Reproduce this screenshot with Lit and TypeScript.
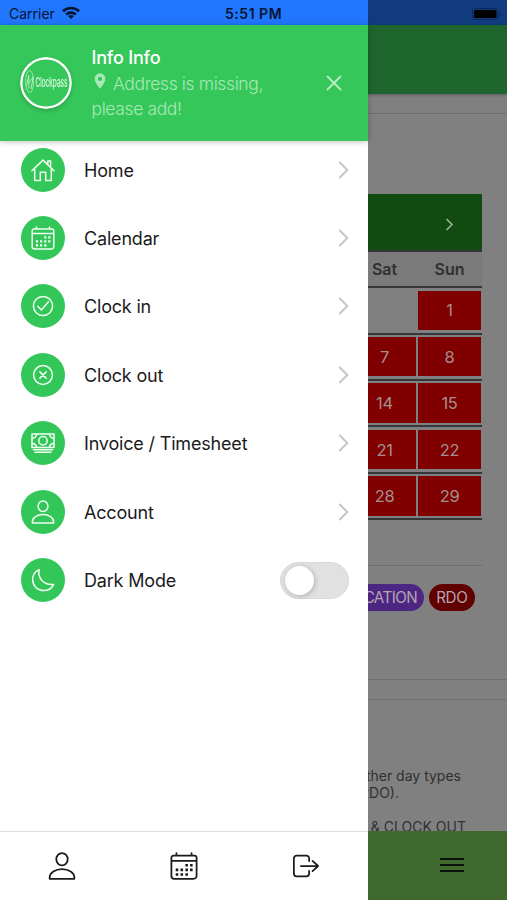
import { LitElement, html, svg, css } from "lit";
import { customElement, property } from "lit/decorators.js";

const calendarShape = svg`
  <path d="M3.2 3h17.6a2 2 0 0 1 2 2v15.5a2.5 2.5 0 0 1-2.5 2.5H3.7a2.5 2.5 0 0 1-2.5-2.5V5a2 2 0 0 1 2-2zM1.2 7.6h21.6M5.5 .9v2.1M18.5 .9v2.1"/>
  <path class="dots" d="M13.2 10.2h2.2v2.2h-2.2zM17.2 10.2h2.2v2.2h-2.2zM4.9 14.2h2.2v2.2h-2.2zM9 14.2h2.2v2.2H9zM13.2 14.2h2.2v2.2h-2.2zM17.2 14.2h2.2v2.2h-2.2zM4.9 18.2h2.2v2.2h-2.2zM9 18.2h2.2v2.2H9zM13.2 18.2h2.2v2.2h-2.2z"/>`;

const personShape = svg`
  <ellipse cx="12" cy="6.2" rx="4.9" ry="5.3"/>
  <path d="M1.4 23v-1.2c0-4 4.8-7.2 10.6-7.2s10.6 3.2 10.6 7.2V23z"/>`;

const shapes: Record<string, unknown> = {
  home: svg`<path d="M.9 12.8 12 2.1l11.1 10.7M3.7 10.6V22.6h5.6v-8.4h5.4v8.4h5.6V10.6M16.8 5.9V3.1h2.8v5.5"/>`,
  calendar: calendarShape,
  check: svg`<circle cx="12" cy="12" r="9.6"/><path d="m6.8 12.3 3.5 3.6 7-8"/>`,
  cross: svg`<circle cx="12" cy="12" r="9.4"/><path d="m8.9 8.9 6.2 6.2M15.1 8.9l-6.2 6.2"/>`,
  cash: svg`<path d="M1 3h22v13.6H1zM2.5 18.8h19M4 21.3h16"/><circle cx="12" cy="9.8" r="4.2"/><path d="M1.3 7.4C4 7 5.3 5.5 5.8 3.2M22.7 7.4C20 7 18.7 5.5 18.2 3.2M1.3 12.2c2.7.4 4 1.9 4.5 4.2M22.7 12.2c-2.7.4-4 1.9-4.5 4.2"/>`,
  person: personShape,
  moon: svg`<path d="M8.1 1.6C6.6 9.8 12.4 17.5 22.6 16.4 20.8 20.4 17 22.6 12.8 22.6 6.6 22.6 1.6 17.8 1.6 11.6 1.6 7.1 4.2 3.4 8.1 1.6z"/>`,
  logout: svg`<path d="M14.7 7.8V5.5A2.4 2.4 0 0 0 12.3 3.1H4A2.4 2.4 0 0 0 1.6 5.5v13a2.4 2.4 0 0 0 2.4 2.4h8.3a2.4 2.4 0 0 0 2.4-2.4v-2.3M7.6 12h14.6M17.6 7.6l4.8 4.4-4.8 4.4"/>`,
};

@customElement("line-icon")
class LineIcon extends LitElement {
  @property() name = "home";
  static styles = css`
    :host { display: block; width: 24px; height: 24px; }
    svg { display: block; width: 100%; height: 100%; overflow: visible; fill: none; stroke: currentColor; stroke-width: 1.5; stroke-linejoin: round; stroke-linecap: round; }
    .dots { fill: currentColor; stroke: none; }
  `;
  render() {
    return html`<svg viewBox="0 0 24 24">${shapes[this.name]}</svg>`;
  }
}

@customElement("side-menu")
class SideMenu extends LitElement {
  static styles = css`
    :host { display: flex; flex-direction: column; height: 900px; background: #fff; color: #1b1b1d; }
    .status { height: 25px; background: #2076fc; color: #061433; display: flex; align-items: center; font-size: 14px; flex: none; }
    .carrier { margin-left: 9px; width: 53px; padding-top: 2px; }
    .wifi { width: 18px; height: 13px; }
    .time { margin-left: 145px; font-weight: 600; font-size: 14px; letter-spacing: .52px; padding-top: 2px; white-space: nowrap; }
    .profile { height: 116px; box-sizing: border-box; background: #35c759; color: #fff; display: flex; padding: 20px 26px 0 20px; box-shadow: 0 1px 6px rgba(0,0,0,.25); flex: none; z-index: 1; }
    .avatar { width: 52px; height: 52px; margin-top: 12px; border-radius: 50%; filter: drop-shadow(0 2px 2px rgba(0,0,0,.18)); }
    .info { margin-left: 19.5px; width: 200px; }
    .name { font-size: 18px; font-weight: 500; line-height: 26px; letter-spacing: -0.2px; }
    .address { font-size: 17.5px; line-height: 25px; font-weight: 300; color: #a9e9b8; letter-spacing: -.38px; }
    .pin { width: 12px; height: 16px; margin: 0 7px 0 2.5px; vertical-align: 1px; }
    .close { width: 16px; height: 16px; margin: 30px 0 0 auto; }
    .items { display: flex; flex-direction: column; margin-top: -5.5px; flex: 1; }
    .item { height: 68.4px; display: flex; align-items: center; padding: 0 19.5px 0 20.5px; }
    .bubble { width: 44px; height: 44px; border-radius: 50%; background: #33c659; color: #f0fff2; display: grid; place-items: center; }
    .label { margin-left: 19.5px; font-size: 18px; flex: 1; white-space: nowrap; letter-spacing: -.18px; padding-top: 1px; }
    .chevron { width: 11px; height: 18px; }
    .toggle { width: 69px; height: 37px; box-sizing: border-box; border: 1px solid #d9d9d9; border-radius: 19px; background: #e1e1e2; padding: 3px 4px; }
    .knob { width: 29px; height: 29px; border-radius: 50%; background: #fff; box-shadow: 1px 1px 5px rgba(0,0,0,.22); }
    .tabs { height: 69px; box-sizing: border-box; border-top: 1px solid #dedede; display: grid; grid-template-columns: repeat(3, 1fr); padding: 0 1px; flex: none; }
    .tab { display: grid; justify-items: center; padding-top: 20px; }
    .tab line-icon { width: 28px; height: 28px; }
  `;
  private entries = [
    ["home", "Home"],
    ["calendar", "Calendar"],
    ["check", "Clock in"],
    ["cross", "Clock out"],
    ["cash", "Invoice / Timesheet"],
    ["person", "Account"],
  ];
  render() {
    return html`
      <div class="status">
        <span class="carrier">Carrier</span>
        <svg class="wifi" viewBox="0 0 18 13" fill="none" stroke="#061433" stroke-width="2.6">
          <path d="M1 5.2a11.5 11.5 0 0 1 16 0M4.2 8.5a7 7 0 0 1 9.6 0"/>
          <path d="M9 13 6.2 10.3a4 4 0 0 1 5.6 0z" fill="#061433" stroke="none"/>
        </svg>
        <span class="time">5:51 PM</span>
      </div>
      <header class="profile">
        <svg class="avatar" viewBox="0 0 52 52">
          <circle cx="26" cy="26" r="24.7" fill="#35c759" stroke="#fff" stroke-width="2.4"/>
          <ellipse cx="9.6" cy="24.6" rx="4" ry="11" fill="none" stroke="#b5edc3" stroke-width=".8"/>
          <path d="M6.5 29 8.8 18.5v13M8.8 26l4.4-6-2.2 12" fill="none" stroke="#b5edc3" stroke-width="1"/>
          <text x="15.4" y="29.8" font-size="13.5" textLength="32" lengthAdjust="spacingAndGlyphs" fill="#d5f6dd" stroke="#d5f6dd" stroke-width=".2">Clockpass</text>
        </svg>
        <div class="info">
          <div class="name">Info Info</div>
          <div class="address"><svg class="pin" viewBox="0 0 12 16"><path fill="#a9e9b8" fill-rule="evenodd" d="M6 .3A5.4 5.4 0 0 0 .6 5.7C.6 9.6 6 15.6 6 15.6s5.4-6 5.4-9.9A5.4 5.4 0 0 0 6 .3zm0 3.5a2.1 2.1 0 1 1 0 4.2 2.1 2.1 0 0 1 0-4.2z"/></svg>Address is missing,<br>please add!</div>
        </div>
        <svg class="close" viewBox="0 0 16 16" stroke="#b9efc5" stroke-width="1.8" stroke-linecap="round"><path d="M1.5 1.5 14.5 14.5M14.5 1.5 1.5 14.5"/></svg>
      </header>
      <nav class="items">
        ${this.entries.map(
          ([icon, label]) => html`<div class="item">
            <span class="bubble"><line-icon name=${icon}></line-icon></span>
            <span class="label">${label}</span>
            <svg class="chevron" viewBox="0 0 11 18" fill="none" stroke="#c6c6c8" stroke-width="2"><path d="m1.3 1 8 8-8 8"/></svg>
          </div>`
        )}
        <div class="item">
          <span class="bubble"><line-icon name="moon"></line-icon></span>
          <span class="label">Dark Mode</span>
          <span class="toggle"><div class="knob"></div></span>
        </div>
      </nav>
      <footer class="tabs">
        ${["person", "calendar", "logout"].map((n) => html`<span class="tab"><line-icon name=${n}></line-icon></span>`)}
      </footer>
    `;
  }
}

@customElement("dimmed-page")
class DimmedPage extends LitElement {
  static styles = css`
    :host { display: flex; flex-direction: column; height: 900px; overflow: hidden; background: #808080; color: #303032; }
    .status { height: 25px; background: #103b7e; display: flex; justify-content: flex-end; align-items: center; padding-right: 6px; flex: none; }
    .battery { width: 29px; height: 12px; margin-top: 2px; }
    .bar { height: 69px; background: #1e662d; box-shadow: 0 1px 3px rgba(0,0,0,.3); flex: none; }
    .gap { height: 19px; border-bottom: 1px solid #6f6f6f; flex: none; }
    .calendar { margin: 80px 25px 0 0; flex: none; }
    .title { height: 56px; background: #124b12; border-bottom: 2px solid #343638; display: flex; align-items: center; justify-content: flex-end; padding-right: 28px; }
    .title svg { width: 9px; height: 13px; margin-top: 5px; }
    .row { display: grid; grid-template-columns: 63px 63px; justify-content: end; column-gap: 2px; padding: 2.5px 1px; height: 39.4px; border-bottom: 2px solid #343638; }
    .days { height: 34.2px; padding: 0 1px; background: #7a7a7a; font-weight: 600; line-height: 34px; text-align: center; font-size: 16px; }
    .cell { background: #800000; color: #a58e8e; display: grid; place-items: center; font-size: 16.5px; letter-spacing: -.3px; }
    .blank { background: none; }
    .rule { height: 1px; background: #6e6e6e; margin: 44.8px 25px 0 0; flex: none; }
    .pills { display: flex; justify-content: flex-end; gap: 4.5px; margin: 18px 32.5px 0 0; flex: none; }
    .pill { height: 27px; line-height: 27px; border-radius: 14px; padding: 0 7px 0 7.7px; font-size: 15.2px; color: #b4a6ae; letter-spacing: -.35px; }
    .vacation { background: #4d2683; letter-spacing: -.6px; }
    .rdo { background: #600000; }
    .divide { height: 19px; border: solid #6f6f6f; border-width: 1px 0; margin-top: 68px; flex: none; }
    .copy { margin: 67px 0 0; flex: 1; min-height: 0; overflow: hidden; display: flex; flex-direction: column; font-size: 14px; line-height: 17px; white-space: nowrap; }
    .line { display: flex; justify-content: flex-end; flex: none; height: 17px; }
    .first { margin-right: 46px; }
    .second { margin-right: 108px; }
    .third { margin-right: 41px; }
    .menu { height: 69px; background: #406a2d; flex: none; display: flex; justify-content: flex-end; align-items: center; padding: 0 43px 2px 0; box-sizing: border-box; }
    .menu svg { width: 24px; height: 16px; }
  `;
  private weeks = [["", "1"], ["7", "8"], ["14", "15"], ["21", "22"], ["28", "29"]];
  render() {
    return html`
      <div class="status"><svg class="battery" viewBox="0 0 29 12"><rect x=".5" y=".5" width="25.5" height="11" rx="3" fill="none" stroke="#0a2858"/><rect x="2" y="2" width="22.5" height="8" rx="1.5"/><path d="M27.5 4.2c1.4.5 1.4 3.1 0 3.6z" fill="#0a2858"/></svg></div>
      <div class="bar"></div>
      <div class="gap"></div>
      <section class="calendar">
        <div class="title"><svg viewBox="0 0 9 13" fill="none" stroke="#9ab09a" stroke-width="1.7"><path d="m1.5 1 5.5 5.5L1.5 12"/></svg></div>
        <div class="row days"><span>Sat</span><span>Sun</span></div>
        ${this.weeks.map((w) => html`<div class="row">${w.map((d) => html`<span class="cell ${d ? "" : "blank"}">${d}</span>`)}</div>`)}
      </section>
      <div class="rule"></div>
      <div class="pills"><span class="pill vacation">VACATION</span><span class="pill rdo">RDO</span></div>
      <div class="divide"></div>
      <div class="copy">
        <div class="line first">other day types</div>
        <div class="line second">(RDO).</div>
        <div class="line"></div>
        <div class="line third">&amp; CLOCK OUT</div>
      </div>
      <div class="menu"><svg viewBox="0 0 24 16" stroke="#0b120b" stroke-width="2"><path d="M0 2h24M0 8h24M0 14h24"/></svg></div>
    `;
  }
}

@customElement("app-root")
class AppRoot extends LitElement {
  static styles = css`
    :host { display: grid; grid-template-columns: 368px 139px; width: 507px; height: 900px; overflow: hidden; font-family: Inter, "Liberation Sans", sans-serif; }
  `;
  render() {
    return html`<side-menu></side-menu><dimmed-page></dimmed-page>`;
  }
}
